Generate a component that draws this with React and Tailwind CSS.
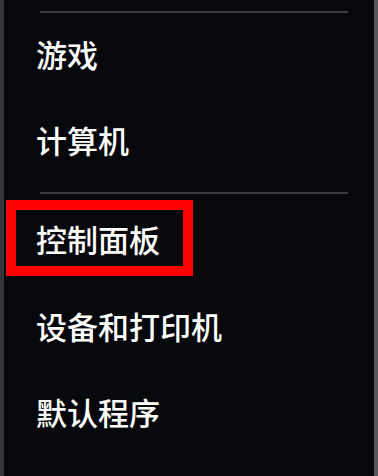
import React from 'react';

const font = { fontFamily: '"Noto Sans CJK SC", "Noto Sans", sans-serif' };

function Item({ label }) {
  return (
    <div className="h-[86px] flex items-center pl-[32px] pb-[5px]">
      <span className="text-[31px] leading-none font-medium text-white">{label}</span>
    </div>
  );
}

function Divider() {
  return <div className="ml-[36px] w-[308px] h-[2px] bg-[#3a3d42]" />;
}

export default function App() {
  return (
    <div
      className="w-[378px] h-[476px] overflow-hidden bg-[#07080c] border-l-4 border-l-[#34363a] border-r-4 border-r-[#55575b] flex flex-col"
      style={font}
    >
      <div className="mt-[11px]">
        <Divider />
      </div>
      <Item label="游戏" />
      <Item label="计算机" />
      <div className="mt-[7px]">
        <Divider />
      </div>
      <div className="mt-[6px] ml-[2px] w-[187px] h-[76px] border-[10px] border-[#ff0000] flex items-center pl-[20px]">
        <span className="text-[31px] leading-none font-medium text-white">控制面板</span>
      </div>
      <div className="mt-[9px]">
        <Item label="设备和打印机" />
      </div>
      <Item label="默认程序" />
    </div>
  );
}
